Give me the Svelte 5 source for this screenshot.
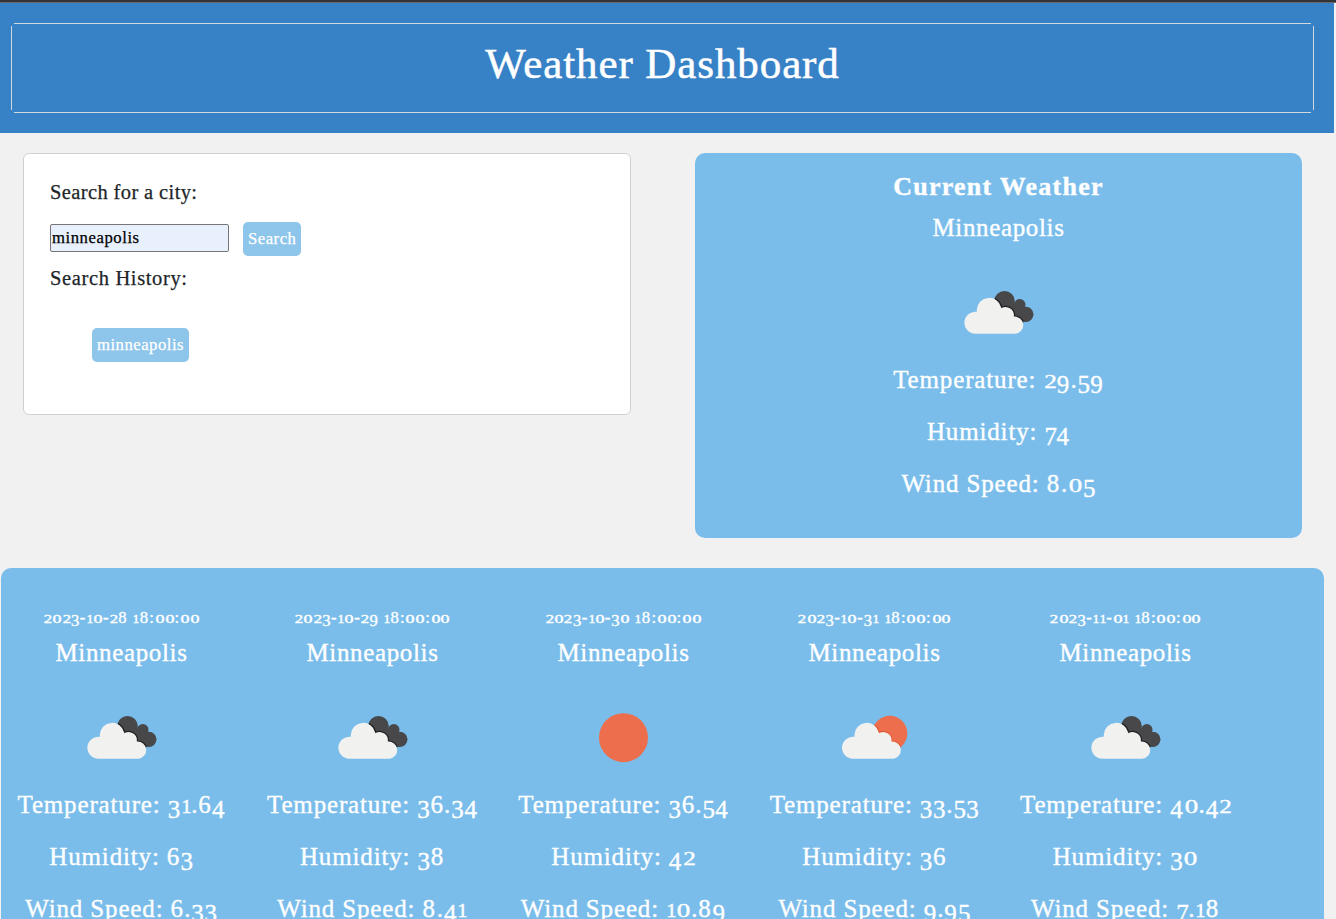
<script>
  let city = $state('minneapolis');
  const history = ['minneapolis'];
  const current = { name: 'Minneapolis', icon: 'broken', temp: '29.59', humidity: '74', wind: '8.05' };
  const forecast = [
    { date: '2023-10-28 18:00:00', icon: 'broken', temp: '31.64', humidity: '63', wind: '6.33' },
    { date: '2023-10-29 18:00:00', icon: 'broken', temp: '36.34', humidity: '38', wind: '8.41' },
    { date: '2023-10-30 18:00:00', icon: 'clear', temp: '36.54', humidity: '42', wind: '10.89' },
    { date: '2023-10-31 18:00:00', icon: 'few', temp: '33.53', humidity: '36', wind: '9.95' },
    { date: '2023-11-01 18:00:00', icon: 'broken', temp: '40.42', humidity: '30', wind: '7.18' }
  ];
</script>

{#snippet figures(text)}{#each text as ch}{#if ch >= '0' && ch <= '9'}<span class="d d{ch}">{ch}</span>{:else}{ch}{/if}{/each}{/snippet}

{#snippet cloud()}
  <path
    d="M105 191a33 33 0 1 1 4-65.7v-7a37 37 0 0 1 73-6q2 6 1 2a25 25 0 0 1 37 25.500a25.500 25.500 0 0 1 5 51.200z"
  />
{/snippet}

{#snippet picture(kind)}
  <svg class="icon" viewBox="25.5 -24 300 300" aria-hidden="true">
    {#if kind === 'clear'}
      <circle cx="174" cy="128" r="73.5" fill="#ec6e4c" />
    {:else if kind === 'few'}
      <circle cx="220" cy="115" r="52.500" fill="#ec6e4c" />
      <g transform="translate(5 0)" fill="#f1f1f0">
        <g stroke="#e2512d" stroke-width="5" clip-path="url(#sun)">{@render cloud()}</g>
        {@render cloud()}
      </g>
      <clipPath id="sun"><circle cx="215" cy="115" r="52.500" /></clipPath>
    {:else}
      <g fill="#48484a">
        <circle cx="192" cy="94" r="31" />
        <circle cx="238" cy="104" r="17" />
        <circle cx="256" cy="133" r="23" />
        <path d="M190 90L240 105L256 156L225 145z" />
      </g>
      <clipPath id="shade"><path d="M162 85L192 75L240 105L256 156L235 158L180 125z" /></clipPath>
      <g fill="#f1f1f0">
        <g stroke="#1f1f21" stroke-width="7" clip-path="url(#shade)">{@render cloud()}</g>
        {@render cloud()}
      </g>
    {/if}
  </svg>
{/snippet}

{#snippet readings(w)}
  <p>Temperature: {@render figures(w.temp)}</p>
  <p>Humidity: {@render figures(w.humidity)}</p>
  <p>Wind Speed: {@render figures(w.wind)}</p>
{/snippet}

<div class="page">
  <header><div class="frame"><h1>Weather Dashboard</h1></div></header>
  <main>
    <section class="search">
      <h2>Search for a city:</h2>
      <div class="row">
        <input bind:value={city} aria-label="City" />
        <button>Search</button>
      </div>
      <h2 class="past">Search History:</h2>
      <ul>
        {#each history as item}<li><button>{item}</button></li>{/each}
      </ul>
    </section>
    <section class="current weather">
      <h4>Current Weather</h4>
      <div class="city">{current.name}</div>
      {@render picture(current.icon)}
      {@render readings(current)}
    </section>
  </main>
  <section class="forecast">
    {#each forecast as day}
      <article class="weather">
        <div class="date">{@render figures(day.date)}</div>
        <div class="city">Minneapolis</div>
        {@render picture(day.icon)}
        {@render readings(day)}
      </article>
    {/each}
  </section>
</div>

<style>
  :global(body) { margin: 0; background: #f1f1f1; overflow: hidden; }
  .page {
    height: 919px;
    overflow: hidden;
    box-sizing: border-box;
    border-top: 2px solid #333436;
    font-family: 'Liberation Serif', serif;
    color: #212529;
    background: linear-gradient(#66676a, #66676a) 0 0 / 100% 1px no-repeat, #f1f1f1;
    padding-top: 1px;
    -webkit-text-stroke: 0.25px currentColor;
  }
  h1, h2, h4, p, ul { margin: 0; font-weight: 400; }
  header { height: 130px; width: 1334px; box-sizing: border-box; background: #3782c6; padding: 20px 20px 20px 11px; }
  .frame {
    --l: linear-gradient(#d0d9df, #d0d9df);
    height: 90px;
    background:
      var(--l) 50% 0 / calc(100% - 6px) 1px no-repeat,
      var(--l) 50% 100% / calc(100% - 6px) 1px no-repeat,
      var(--l) 0 50% / 1px calc(100% - 6px) no-repeat,
      var(--l) 100% 50% / 1px calc(100% - 6px) no-repeat;
  }
  h1 { text-align: center; color: #fff; font-size: 43px; line-height: 82px; letter-spacing: 0.9px; -webkit-text-stroke-width: 0.5px; }
  main { display: flex; align-items: flex-start; gap: 64px; padding: 20px 0 0 23px; }
  .search {
    width: 608px;
    height: 262px;
    box-sizing: border-box;
    border: 1px solid #d0d0d0;
    border-radius: 6px;
    background: #fff;
    padding: 26px;
  }
  h2 { font-size: 20.5px; line-height: 24px; letter-spacing: 0.38px; }
  .past { letter-spacing: 0.64px; padding-top: 10px; }
  .row { display: flex; align-items: center; gap: 14px; margin-top: 18px; }
  input {
    width: 179px;
    height: 28px;
    box-sizing: border-box;
    margin: 0 0 2px;
    padding: 0 1px;
    border: 1px solid #767676;
    border-radius: 2px;
    background: #e8f0fe;
    color: #000;
    font: 16.7px 'Liberation Serif', serif;
    letter-spacing: 0.55px;
    outline: none;
  }
  button {
    height: 34px;
    padding: 0 5px;
    border: 0;
    border-radius: 5px;
    background: #8ec5eb;
    color: #fff;
    font: 16.7px 'Liberation Serif', serif;
    letter-spacing: 0.5px;
    -webkit-text-stroke: 0.25px #fff;
  }
  ul { list-style: none; padding: 38px 0 0 42px; }
  .weather {
    text-align: center;
    color: #fff;
    font-size: 25px;
    line-height: 36px;
    letter-spacing: 0.034em;
    -webkit-text-stroke-width: 0.35px;
  }
  .current { width: 607px; height: 385px; box-sizing: border-box; padding-top: 20px; border-radius: 10px; background: #7abdeb; }
  h4 { font-size: 26px; font-weight: 700; line-height: 28px; letter-spacing: 1.25px; margin-bottom: 9px; }
  .city { letter-spacing: 0.026em; margin-bottom: 16px; }
  .icon { display: block; width: 100px; height: 100px; margin: 0 auto; }
  p { margin-bottom: 16px; white-space: nowrap; }
  .forecast {
    display: flex;
    gap: 40px;
    width: 1323px;
    height: 440px;
    box-sizing: border-box;
    margin: 30px 0 0 1px;
    padding: 40px 0 0 15px;
    border-radius: 10px;
    background: #7abdeb;
  }
  article { width: 211px; flex: none; }
  .date { font-size: 16.7px; line-height: 19px; margin-bottom: 8px; white-space: nowrap; }
  .d { line-height: 0; }
  /* Old-style figures: 0, 1 and 2 sit at x-height, the others with tails hang below the baseline. */
  .d0, .d1, .d2 { display: inline-block; font-size: 0.72em; letter-spacing: 0; }
  .d0 { width: 0.5em; margin: 0 0.16em; transform: scaleX(1.5); }
  .d1 { width: 0.5em; margin: 0 0.036em; transform: scaleX(1.15); }
  .d2 { width: 0.5em; margin: 0 0.122em; transform: scaleX(1.4); }
  .d3, .d4, .d5, .d7, .d9 { position: relative; top: 0.19em; }
  .d3 { letter-spacing: 0.03em; }
  .d4 { letter-spacing: 0.042em; }
  .d5 { letter-spacing: 0.007em; }
  .d6 { letter-spacing: 0.043em; }
  .d7 { letter-spacing: -0.017em; }
  .d8 { letter-spacing: 0.072em; }
  .d9 { letter-spacing: 0.043em; }
</style>
